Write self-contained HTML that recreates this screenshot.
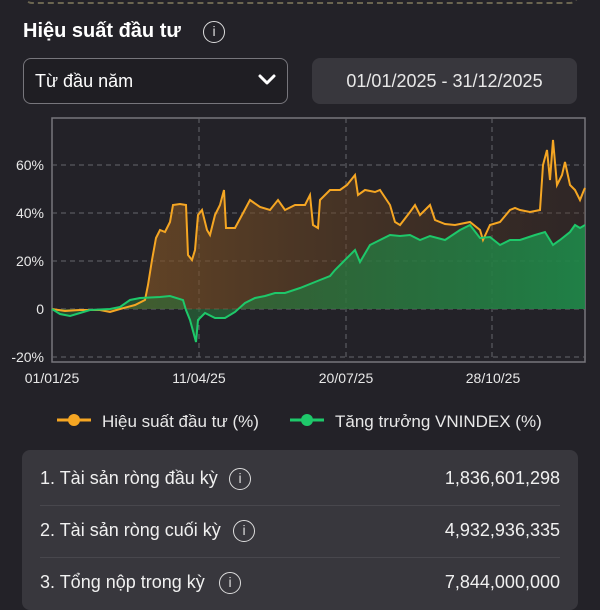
<!DOCTYPE html>
<html><head><meta charset="utf-8"><style>
*{margin:0;padding:0;box-sizing:border-box}
body{width:600px;height:600px;overflow:hidden;background:#232228;font-family:"Liberation Sans",sans-serif;color:#fff;position:relative}
.abs{position:absolute}
.info{position:absolute;border:1.5px solid #ddd;border-radius:50%;width:22px;height:22px;font-size:14px;text-align:center;line-height:19px;color:#ddd;font-family:"Liberation Sans",sans-serif}
.row{position:absolute;left:40px;right:40px;font-size:18px;color:#f0f0f0}
.row .v{position:absolute;right:0;top:0}
</style></head><body>
<div class="abs" style="left:24px;top:-12px;width:554px;height:16px;border:2px dashed #6a6550;border-top:none;border-radius:0 0 8px 8px"></div>
<div class="abs" style="left:23px;top:20px;font-size:20px;font-weight:bold">Hiệu suất đầu tư</div>
<div class="info" style="left:203px;top:21px">i</div>
<div class="abs" style="left:23px;top:58px;width:265px;height:46px;border:1.5px solid #77767c;border-radius:8px;background:#1f1e23"></div>
<div class="abs" style="left:35px;top:71px;font-size:18px">Từ đầu năm</div>
<svg class="abs" style="left:257px;top:73px" width="20" height="14"><path d="M3 3 L10 10 L17 3" stroke="#fff" stroke-width="3" fill="none" stroke-linecap="round" stroke-linejoin="round"/></svg>
<div class="abs" style="left:312px;top:58px;width:265px;height:46px;border-radius:8px;background:#38373d;text-align:center;line-height:46px;font-size:18px;color:#e8e8e8">01/01/2025 - 31/12/2025</div>
<svg class="abs" style="left:0;top:0" width="600" height="440">
<defs>
<linearGradient id="og" x1="0" x2="1" y1="0" y2="0"><stop offset="0" stop-color="#8a5a25" stop-opacity="0.75"/><stop offset="1" stop-color="#4a3020" stop-opacity="0.3"/></linearGradient>
<linearGradient id="gg" x1="0" x2="1" y1="0" y2="0"><stop offset="0" stop-color="#2a6a35" stop-opacity="0.5"/><stop offset="1" stop-color="#1e8a4a" stop-opacity="0.9"/></linearGradient>
</defs>
<rect x="52" y="118" width="533" height="244" fill="none" stroke="#77767c" stroke-width="1.5"/>
<g stroke="#66656b" stroke-dasharray="5,4" stroke-width="1">
<line x1="52" x2="585" y1="165" y2="165"/><line x1="52" x2="585" y1="213" y2="213"/><line x1="52" x2="585" y1="261" y2="261"/><line x1="52" x2="585" y1="309" y2="309"/><line x1="52" x2="585" y1="357" y2="357"/>
<line x1="199" x2="199" y1="118" y2="362"/><line x1="346" x2="346" y1="118" y2="362"/><line x1="492" x2="492" y1="118" y2="362"/>
</g>
<polygon fill="url(#og)" points="52,309 65,311 80,310 100,310 110,312 120,309 135,305 145,300 148,285 152,260 156,238 160,230 165,232 170,222 173,205 180,204 186,205 188,255 192,260 195,250 198,215 202,210 207,230 210,235 215,215 220,205 224,190 226,228 235,228 242,215 250,200 260,207 270,210 278,200 285,210 295,205 305,205 310,195 313,225 318,228 320,200 330,190 340,190 347,185 355,175 358,195 365,190 375,192 380,190 390,205 395,222 400,225 410,212 415,205 420,215 430,205 435,220 445,224 455,225 470,222 480,230 483,240 490,225 500,222 510,210 515,208 520,210 530,212 540,210 543,165 547,150 550,180 553,140 557,185 562,175 565,162 570,185 575,190 580,200 584,190 585,188 585,309"/>
<polygon fill="url(#gg)" points="52,309 60,314 70,316 80,313 90,310 110,309 120,307 130,300 140,298 160,297 170,296 183,300 186,310 190,320 196,342 198,320 205,313 215,318 225,318 235,312 245,303 255,298 265,296 275,293 285,293 300,288 320,280 330,276 335,270 345,260 355,250 360,262 370,245 380,240 390,235 400,236 410,235 420,240 430,236 445,240 460,230 470,225 480,238 490,237 500,245 510,240 520,240 535,235 545,232 553,245 560,240 570,232 575,225 580,228 585,225 585,309"/>
<polyline fill="none" stroke="#f5a623" stroke-width="2" points="52,309 65,311 80,310 100,310 110,312 120,309 135,305 145,300 148,285 152,260 156,238 160,230 165,232 170,222 173,205 180,204 186,205 188,255 192,260 195,250 198,215 202,210 207,230 210,235 215,215 220,205 224,190 226,228 235,228 242,215 250,200 260,207 270,210 278,200 285,210 295,205 305,205 310,195 313,225 318,228 320,200 330,190 340,190 347,185 355,175 358,195 365,190 375,192 380,190 390,205 395,222 400,225 410,212 415,205 420,215 430,205 435,220 445,224 455,225 470,222 480,230 483,240 490,225 500,222 510,210 515,208 520,210 530,212 540,210 543,165 547,150 550,180 553,140 557,185 562,175 565,162 570,185 575,190 580,200 584,190 585,188"/>
<polyline fill="none" stroke="#1ec86a" stroke-width="2" points="52,309 60,314 70,316 80,313 90,310 110,309 120,307 130,300 140,298 160,297 170,296 183,300 186,310 190,320 196,342 198,320 205,313 215,318 225,318 235,312 245,303 255,298 265,296 275,293 285,293 300,288 320,280 330,276 335,270 345,260 355,250 360,262 370,245 380,240 390,235 400,236 410,235 420,240 430,236 445,240 460,230 470,225 480,238 490,237 500,245 510,240 520,240 535,235 545,232 553,245 560,240 570,232 575,225 580,228 585,225"/>
<g fill="#e8e8e8" font-size="14" font-family="Liberation Sans" text-anchor="end">
<text x="44" y="170">60%</text><text x="44" y="218">40%</text><text x="44" y="266">20%</text><text x="44" y="314">0</text><text x="44" y="362">-20%</text>
</g>
<g fill="#e8e8e8" font-size="14" font-family="Liberation Sans" text-anchor="middle">
<text x="52" y="383">01/01/25</text><text x="199" y="383">11/04/25</text><text x="346" y="383">20/07/25</text><text x="493" y="383">28/10/25</text>
</g>
<line x1="57" x2="91" y1="420" y2="420" stroke="#f5a623" stroke-width="3"/><circle cx="74" cy="420" r="6" fill="#f5a623"/>
<line x1="290" x2="324" y1="420" y2="420" stroke="#1ec86a" stroke-width="3"/><circle cx="307" cy="420" r="6" fill="#1ec86a"/>
<g fill="#e8e8e8" font-size="17" font-family="Liberation Sans">
<text x="102" y="427">Hiệu suất đầu tư (%)</text><text x="335" y="427">Tăng trưởng VNINDEX (%)</text>
</g>
</svg>
<div class="abs" style="left:22px;top:450px;width:556px;height:160px;background:#38373d;border-radius:8px"></div>
<div class="abs" style="left:40px;top:505px;width:520px;border-top:1px solid #48474d"></div>
<div class="abs" style="left:40px;top:557px;width:520px;border-top:1px solid #48474d"></div>
<div class="row" style="top:468px">1. Tài sản ròng đầu kỳ<span class="v">1,836,601,298</span></div>
<div class="info" style="left:229px;top:468px">i</div>
<div class="row" style="top:520px">2. Tài sản ròng cuối kỳ<span class="v">4,932,936,335</span></div>
<div class="info" style="left:233px;top:520px">i</div>
<div class="row" style="top:572px">3. Tổng nộp trong kỳ<span class="v">7,844,000,000</span></div>
<div class="info" style="left:219px;top:572px">i</div>
</body></html>
